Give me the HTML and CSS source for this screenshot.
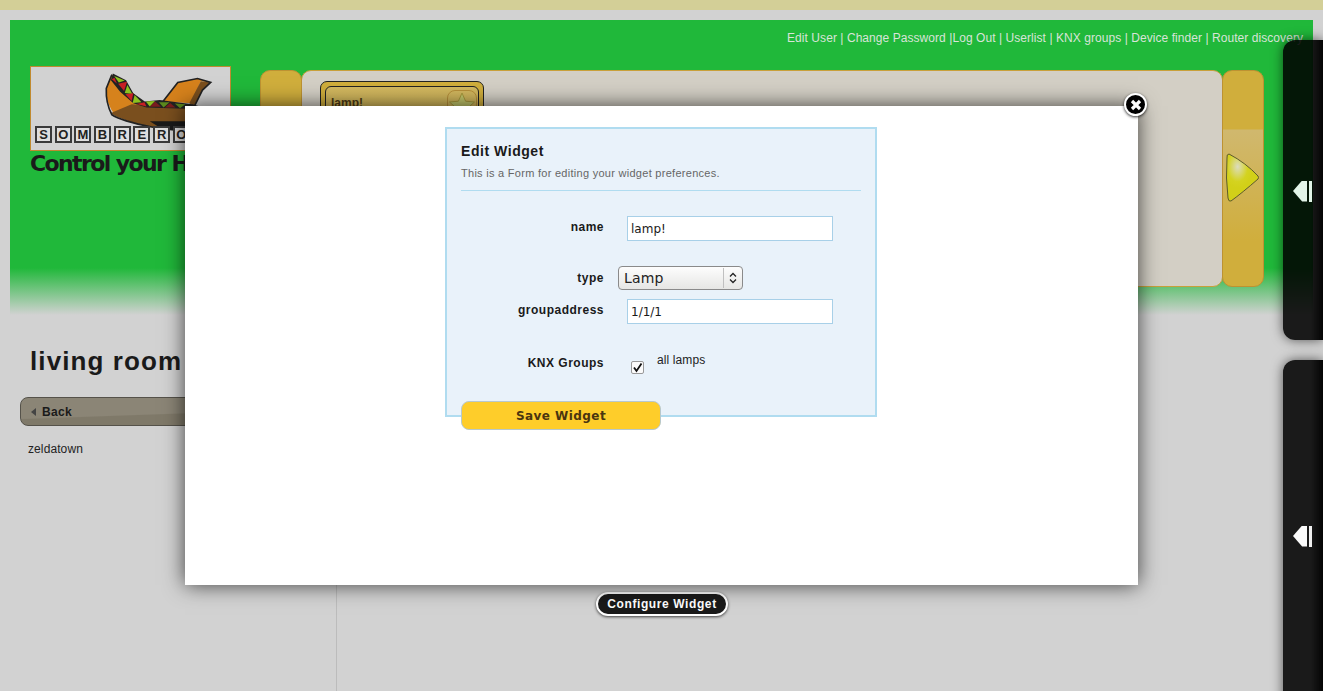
FILE: index.html
```html
<!DOCTYPE html>
<html lang="en">
<head>
<meta charset="utf-8">
<title>Sombrero</title>
<link rel="stylesheet" href="styles.css">
</head>
<body>
<div class="strip"></div>
<header class="header">
  <nav class="nav">Edit User | Change Password |Log Out | Userlist | KNX groups | Device finder | Router discovery</nav>
  <div class="header-row">
    <div class="brand">
      <div class="logo">
        <svg class="logo-art" viewBox="30 15 603 252" aria-hidden="true">
          <path d="M275 38L258 80Q256 125 285 162L385 135L340 95Z" fill="#d6821c"/>
          <path d="M430 120L475 62L535 50L575 62L545 58L515 125Z" fill="#d6821c"/>
          <path d="M545 58L575 62L550 85L525 135L510 125Z" fill="#7a4f1e"/>
          <path d="M272 155Q300 178 400 198L520 215L580 140L385 132L335 128Z" fill="#7a4f1e"/>
          <path d="M390 180L520 180L520 215L430 205Z" fill="#1a1a1a"/>
          <path d="M275 38L258 80Q256 125 275 160Q300 178 400 198" fill="none" stroke="#222" stroke-width="5"/>
          <path d="M430 120L475 62L535 50L575 62L550 85L525 135" fill="none" stroke="#222" stroke-width="5"/>
          <path d="M278 35L318 55L340 95L375 120L420 115L520 128L560 140L500 142L380 138L340 125L300 90L272 55Z" fill="#222"/>
          <path d="M282 42L314 56L296 62Z" fill="#8cc21e"/>
          <path d="M275 52L283 48L290 65Z" fill="#c81f24"/>
          <path d="M294 66L321 60L312 88Z" fill="#c81f24"/>
          <path d="M322 70L337 97L314 94Z" fill="#8cc21e"/>
          <path d="M316 98L340 95L335 118Z" fill="#c81f24"/>
          <path d="M344 100L365 122L338 124Z" fill="#8cc21e"/>
          <path d="M350 127L374 122L380 135Z" fill="#c81f24"/>
          <path d="M378 120L406 118L390 135Z" fill="#8cc21e"/>
          <path d="M406 120L424 136L390 136Z" fill="#7a1c1e"/>
          <path d="M418 122L450 122L432 138Z" fill="#5c8a1e"/>
          <path d="M452 124L468 138L436 138Z" fill="#7a1c1e"/>
          <path d="M466 126L498 128L482 140Z" fill="#5c8a1e"/>
        </svg>
        <div class="logo-word">
          <span class="tile">S</span><span class="tile">O</span><span class="tile">M</span><span class="tile">B</span><span class="tile">R</span><span class="tile">E</span><span class="tile">R</span><span class="tile">O</span>
        </div>
      </div>
      <div class="tagline">Control your Home</div>
    </div>
    <div class="carousel">
      <div class="handle"></div>
      <div class="track">
        <div class="card">
          <div class="card-inner">
            <span class="card-name">lamp!</span>
            <span class="card-star">
              <svg width="28" height="28" viewBox="0 0 28 28" aria-hidden="true"><path d="M14 2L17.6 10.2L26.5 11L19.8 17L21.8 25.7L14 21L6.2 25.7L8.2 17L1.5 11L10.400 10.2Z" fill="#c4c86c" stroke="#a89a3c"/></svg>
            </span>
          </div>
        </div>
      </div>
      <div class="handle handle-next">
        <svg class="arrow" width="34" height="50" viewBox="0 0 34 50" aria-hidden="true">
          <defs>
            <radialGradient id="shine" cx="0.35" cy="0.27" r="0.45">
              <stop offset="0" stop-color="#dcdcc0"/>
              <stop offset="0.7" stop-color="#d4d320"/>
              <stop offset="1" stop-color="#d2d018"/>
            </radialGradient>
          </defs>
          <path d="M3 1Q0.500 1 1 5Q-0.500 25 2 45Q2.500 49 5 48Q16 40 32 26Q33 24.500 32 23Q20 10 3 1Z" fill="url(#shine)" stroke="#5c5a2c"/>
        </svg>
      </div>
    </div>
  </div>
</header>
<main class="main">
  <aside class="side">
    <h1 class="room">living room</h1>
    <a class="back"><span class="back-tri"></span>Back</a>
    <p class="place">zeldatown</p>
  </aside>
  <section class="content">
    <a class="configure">Configure Widget</a>
  </section>
</main>

<div class="drawer drawer-one"><span class="pin"><span class="pin-tri"></span><span class="pin-bar"></span></span></div>
<div class="drawer drawer-two"><span class="pin"><span class="pin-tri"></span><span class="pin-bar"></span></span></div>

<div class="modal">
  <a class="close">
    <svg width="12" height="12" viewBox="0 0 12 12" aria-hidden="true"><path d="M2 2L10 10M10 2L2 10" stroke="#fff" stroke-width="3.200"/></svg>
  </a>
  <form class="form">
    <h2 class="form-title">Edit Widget</h2>
    <p class="form-sub">This is a Form for editing your widget preferences.</p>
    <div class="form-rule"></div>
    <div class="row row-name">
      <label class="label">name</label>
      <input class="input" type="text" value="lamp!">
    </div>
    <div class="row row-type">
      <label class="label">type</label>
      <div class="select">
        <span class="select-text">Lamp</span>
        <span class="select-btn">
          <svg width="8" height="12" viewBox="0 0 8 12" aria-hidden="true"><path d="M1 4.500L4 1.500L7 4.500M1 7.500L4 10.500L7 7.500" fill="none" stroke="#222" stroke-width="1.300"/></svg>
        </span>
      </div>
    </div>
    <div class="row row-group">
      <label class="label">groupaddress</label>
      <input class="input" type="text" value="1/1/1">
    </div>
    <div class="row row-knx">
      <label class="label">KNX Groups</label>
      <span class="check">
        <svg width="11" height="11" viewBox="0 0 11 11" aria-hidden="true"><path d="M2 5.500L4.500 9L9.500 1.500" fill="none" stroke="#111" stroke-width="1.800"/></svg>
      </span>
      <span class="check-text">all lamps</span>
    </div>
    <button class="save" type="button">Save Widget</button>
  </form>
</div>
</body>
</html>
```

FILE: styles.css
```css
* { box-sizing: border-box; }
html, body { height: 100%; }
body {
  margin: 0;
  height: 691px;
  overflow: hidden;
  position: relative;
  background: #d2d2d2;
  color: #1a1a1a;
  font-family: "Liberation Sans", Arial, sans-serif;
}
.strip { height: 10px; background: #d3cf97; }

.header {
  margin: 10px 10px 0;
  height: 295px;
  background: linear-gradient(to bottom, #20b83a 0, #20b83a 248px, #d2d2d2 295px);
}
.nav {
  height: 16px;
  padding: 10px 10px 0 0;
  box-sizing: content-box;
  text-align: right;
  font-size: 12px;
  line-height: 16px;
  letter-spacing: 0.06px;
  color: #d8e4d8;
}
.header-row { display: flex; margin-top: 20px; padding-left: 20px; }
.brand { width: 230px; flex: none; }
.logo {
  position: relative;
  width: 201px;
  height: 85px;
  border: 1px solid #c08a30;
  background: #d2d2d2;
  display: flex;
  align-items: flex-end;
  padding: 0 0 7px 4px;
}
.logo-art { position: absolute; left: 0; top: 0; width: 199px; height: 83px; }
.logo-word { position: relative; display: flex; gap: 2.700px; }
.tile {
  width: 17px;
  height: 17px;
  border: 2px solid #3a3a3a;
  background: #dedede;
  font: bold 13px/13px "Liberation Sans", sans-serif;
  text-align: center;
  color: #222;
}
.tagline {
  margin-top: 1px;
  font: bold 22px/24px "DejaVu Sans", sans-serif;
  letter-spacing: -1.6px;
  color: #1a1a1a;
  white-space: nowrap;
}

.carousel { display: flex; margin-top: 4px; height: 217px; }
.handle {
  width: 42px;
  height: 217px;
  background: #d0ae3c;
  border: 1px solid #bd9232;
  border-radius: 10px;
  position: relative;
}
.handle-next {
  margin-left: -1px;
  background: linear-gradient(to bottom, #d0ae3c 0, #d0ae3c 58px, #d0b86e 59px, #d0ae3c 170px);
}
.arrow { position: absolute; left: 3px; top: 82px; overflow: visible; }
.track {
  width: 922px;
  margin-left: -1px;
  height: 217px;
  background: #d3cfc5;
  border: 1px solid #c8a03a;
  border-radius: 10px;
  padding: 10px 0 0 18px;
}
.card {
  width: 164px;
  height: 120px;
  background: #d0ae3c;
  border: 1px solid #222;
  border-radius: 7px;
  padding: 4px;
}
.card-inner {
  height: 100%;
  border: 1px solid #222;
  border-radius: 6px;
  display: flex;
  justify-content: space-between;
  align-items: flex-start;
  padding: 3px 1px 0 5px;
  background: linear-gradient(to bottom, #d2b860, #d0ae3c);
}
.card-name { font-size: 12px; font-weight: bold; color: #4d3a14; margin-top: 6px; }
.card-star {
  width: 30px;
  height: 30px;
  border: 1px solid #b8903a;
  border-radius: 8px;
  display: flex;
  align-items: center;
  justify-content: center;
}

.main { display: grid; grid-template-columns: 337px 1fr; height: 376px; }
.side { border-right: 1px solid #bcbcbc; padding: 30px 0 0 20px; }
.room {
  margin: 0 0 0 10px;
  font-size: 26px;
  line-height: 32px;
  font-weight: bold;
  letter-spacing: 1.100px;
  color: #1a1a1a;
}
.back {
  display: flex;
  align-items: center;
  width: 296px;
  height: 29px;
  margin-top: 20px;
  padding-left: 10px;
  background: linear-gradient(178deg, #8b8576 0, #8b8576 55%, #7f7969 58%, #7f7969 100%);
  border: 1px solid #55524a;
  border-radius: 8px;
  font-size: 12px;
  font-weight: bold;
  letter-spacing: 0.3px;
  color: #1a1a1a;
}
.back-tri {
  width: 0;
  height: 0;
  margin-right: 6px;
  border-style: solid;
  border-width: 4px 5px 4px 0;
  border-color: transparent #444 transparent transparent;
}
.place { margin: 16px 0 0 8px; font-size: 12px; line-height: 14px; letter-spacing: 0.1px; color: #222; }

.content { padding: 277px 0 0 259px; }
.configure {
  display: block;
  width: 132px;
  height: 24px;
  background: #1a1a1a;
  border: 2px solid #fff;
  border-radius: 12px;
  box-shadow: 0 1px 3px rgba(0, 0, 0, 0.7);
  color: #fff;
  font-size: 12px;
  line-height: 20px;
  font-weight: bold;
  letter-spacing: 0.6px;
  text-align: center;
}

.drawer {
  position: absolute;
  left: 1283px;
  width: 40px;
  background: linear-gradient(to right, rgba(0, 0, 0, 0) 70%, rgba(0, 0, 0, 0.85) 100%), rgba(0, 0, 0, 0.88);
  border-radius: 12px 0 0 12px;
  box-shadow: 0 0 12px rgba(0, 0, 0, 0.6);
  display: flex;
  align-items: center;
}
.drawer-one { top: 40px; height: 300px; padding-top: 2px; }
.drawer-two { top: 360px; height: 351px; padding-top: 1px; }
.pin { display: flex; align-items: center; margin-left: 10px; }
.pin-tri {
  width: 14px;
  height: 21px;
  background: #fafafa;
  clip-path: polygon(0 50%, 65% 0, 100% 0, 100% 100%, 65% 100%);
}
.pin-bar { width: 3px; height: 21px; background: #f0f0f0; margin-left: 2px; }
.drawer-one .pin-tri, .drawer-one .pin-bar { background: #e2f4e8; }

.modal {
  position: absolute;
  left: 185px;
  top: 106px;
  width: 953px;
  height: 479px;
  background: #fff;
  box-shadow: 0 0 20px rgba(0, 0, 0, 0.7);
  padding: 21px 0 0 260px;
}
.close {
  position: absolute;
  right: -9px;
  top: -13px;
  width: 23px;
  height: 23px;
  border-radius: 50%;
  background: #000;
  border: 2px solid #fff;
  box-shadow: 0 1px 3px rgba(0, 0, 0, 0.8);
  display: flex;
  align-items: center;
  justify-content: center;
}
.form {
  width: 432px;
  height: 290px;
  background: #e9f2fa;
  border: 2px solid #b0dcf0;
  padding: 14px 14px 0;
}
.form-title {
  margin: 0;
  font-size: 14px;
  line-height: 16px;
  font-weight: bold;
  letter-spacing: 0.55px;
  color: #1a1a1a;
}
.form-sub {
  margin: 8px 0 0;
  font-size: 11px;
  line-height: 13px;
  letter-spacing: 0.28px;
  color: #666;
}
.form-rule { height: 1px; margin-top: 10px; background: #b0dcf0; }
.row { display: flex; align-items: flex-start; }
.row-name { margin-top: 25px; height: 25px; }
.row-type { margin-top: 25px; height: 24px; }
.row-group { margin-top: 9px; height: 25px; }
.row-knx { margin-top: 31px; height: 30px; }
.label {
  width: 143px;
  flex: none;
  text-align: right;
  font-size: 12px;
  font-weight: bold;
  line-height: 14px;
  letter-spacing: 0.5px;
  color: #1a1a1a;
  margin-top: 4px;
}
.row-type .label { margin-top: 5px; }
.row-group .label { margin-top: 4px; }
.row-knx .label { margin-top: 1px; }
.input {
  width: 206px;
  height: 25px;
  margin: 0 0 0 23px;
  padding: 0 3px;
  background: #fff;
  border: 1px solid #a8d0e8;
  border-radius: 0;
  font: 12px "DejaVu Sans", sans-serif;
  color: #1a1a1a;
  outline: none;
}
.select {
  width: 125px;
  height: 24px;
  margin-left: 14px;
  display: flex;
  align-items: center;
  border: 1px solid #8a8a8a;
  border-radius: 4px;
  background: linear-gradient(to bottom, #fdfdfd, #e6e6e4);
  font: 14px "DejaVu Sans", sans-serif;
  letter-spacing: 0.2px;
  color: #222;
  padding: 1px 0 1px 5px;
}
.select-text { flex: 1; }
.select-btn {
  width: 19px;
  height: 20px;
  border-left: 1px solid #c0c0c0;
  display: flex;
  align-items: center;
  justify-content: center;
}
.check {
  width: 13px;
  height: 13px;
  margin: 6px 0 0 27px;
  background: #fbfbfb;
  border: 1px solid #999;
  border-radius: 2px;
  display: flex;
  align-items: center;
  justify-content: center;
}
.check-text { margin: -2px 0 0 13px; font-size: 12px; line-height: 14px; letter-spacing: 0.1px; color: #222; }
.save {
  display: block;
  position: relative;
  width: 200px;
  height: 29px;
  margin-top: 16px;
  padding: 0;
  background: #fecd2a;
  border: 1px solid #b8c8cc;
  border-radius: 8px;
  font: bold 12px "DejaVu Sans", sans-serif;
  letter-spacing: 0.45px;
  color: #4a3510;
}
```
